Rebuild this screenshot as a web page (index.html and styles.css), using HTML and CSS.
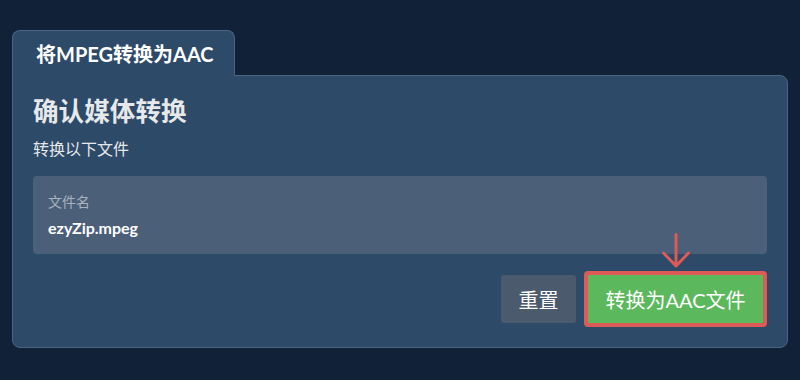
FILE: index.html
```html
<!DOCTYPE html>
<html lang="zh">

<head>
    <meta charset="UTF-8">
    <meta name="viewport" content="width=device-width, initial-scale=1.0">
    <link rel="stylesheet" href="styles.css">
</head>

<body>
    <div class="converter">
        <!-- Tab strip -->
        <div class="tab-strip">
            <div class="tab">将MPEG转换为AAC</div>
        </div>

        <!-- Main panel -->
        <div class="panel">
            <div class="panel-title">确认媒体转换</div>
            <div class="panel-subtitle">转换以下文件</div>

            <div class="file-box">
                <div class="file-label">文件名</div>
                <div class="file-name">ezyZip.mpeg</div>
            </div>

            <div class="actions">
                <button class="btn btn-reset">重置</button>
                <div class="convert-wrap">
                    <svg class="hint-arrow" width="30" height="36" viewBox="0 0 30 36">
                        <path d="M15 1.5 V33 M2.5 20 L15 33 L27.5 20" fill="none" stroke="#dc5b57" stroke-width="3" stroke-linecap="round" stroke-linejoin="round"/>
                    </svg>
                    <button class="btn btn-convert">转换为AAC文件</button>
                </div>
            </div>
        </div>
    </div>
</body>

</html>
```

FILE: styles.css
```css
body {
    margin: 0;
    background-color: #112238;
    font-family: 'Lato', 'Noto Sans CJK SC', sans-serif;
    color: #e9ecef;
}

.converter {
    padding: 30px 12px 0 12px;
}

.tab-strip {
    display: flex;
}

.tab {
    position: relative;
    z-index: 1;
    margin-bottom: -1px;
    width: 223px;
    height: 46px;
    box-sizing: border-box;
    padding: 0 0 0 23px;
    background-color: #2d4a69;
    border: 1px solid #4a6584;
    border-bottom: none;
    border-radius: 8px 8px 0 0;
    font-size: 20px;
    font-weight: bold;
    line-height: 46px;
    color: #ffffff;
}

.panel {
    background-color: #2d4a69;
    border: 1px solid #4a6584;
    border-radius: 0 8px 8px 8px;
    padding: 20px 20px 20px 20px;
}

.panel-title {
    font-size: 25.6px;
    font-weight: bold;
    color: #e6e8ea;
    line-height: 30px;
}

.panel-subtitle {
    font-size: 16px;
    margin-top: 12px;
    color: #e6e8ea;
    line-height: 22px;
}

.file-box {
    margin-top: 16px;
    background-color: #4b5f78;
    border-radius: 4px;
    height: 78px;
    box-sizing: border-box;
    padding: 16px 16px 0 15px;
}

.file-label {
    font-size: 14px;
    color: #a9b3bf;
    line-height: 20px;
}

.file-name {
    margin-top: 5px;
    font-size: 16px;
    font-weight: bold;
    color: #ffffff;
    line-height: 22px;
}

.actions {
    display: flex;
    justify-content: flex-end;
    align-items: center;
    gap: 8px;
    margin-top: 17px;
}

.btn {
    font-family: 'Lato', 'Noto Sans CJK SC', sans-serif;
    font-size: 20px;
    color: #ffffff;
    border: none;
    padding: 0;
    cursor: pointer;
}

.btn-reset {
    width: 75px;
    height: 48px;
    background-color: #4b5a6c;
    border-radius: 3px;
}

.convert-wrap {
    position: relative;
    display: flex;
}

.hint-arrow {
    position: absolute;
    left: 77px;
    top: -38px;
}

.btn-convert {
    width: 183px;
    height: 56px;
    background-color: #5cb85c;
    border: 4px solid #dc5b57;
    border-radius: 4px;
}
```
